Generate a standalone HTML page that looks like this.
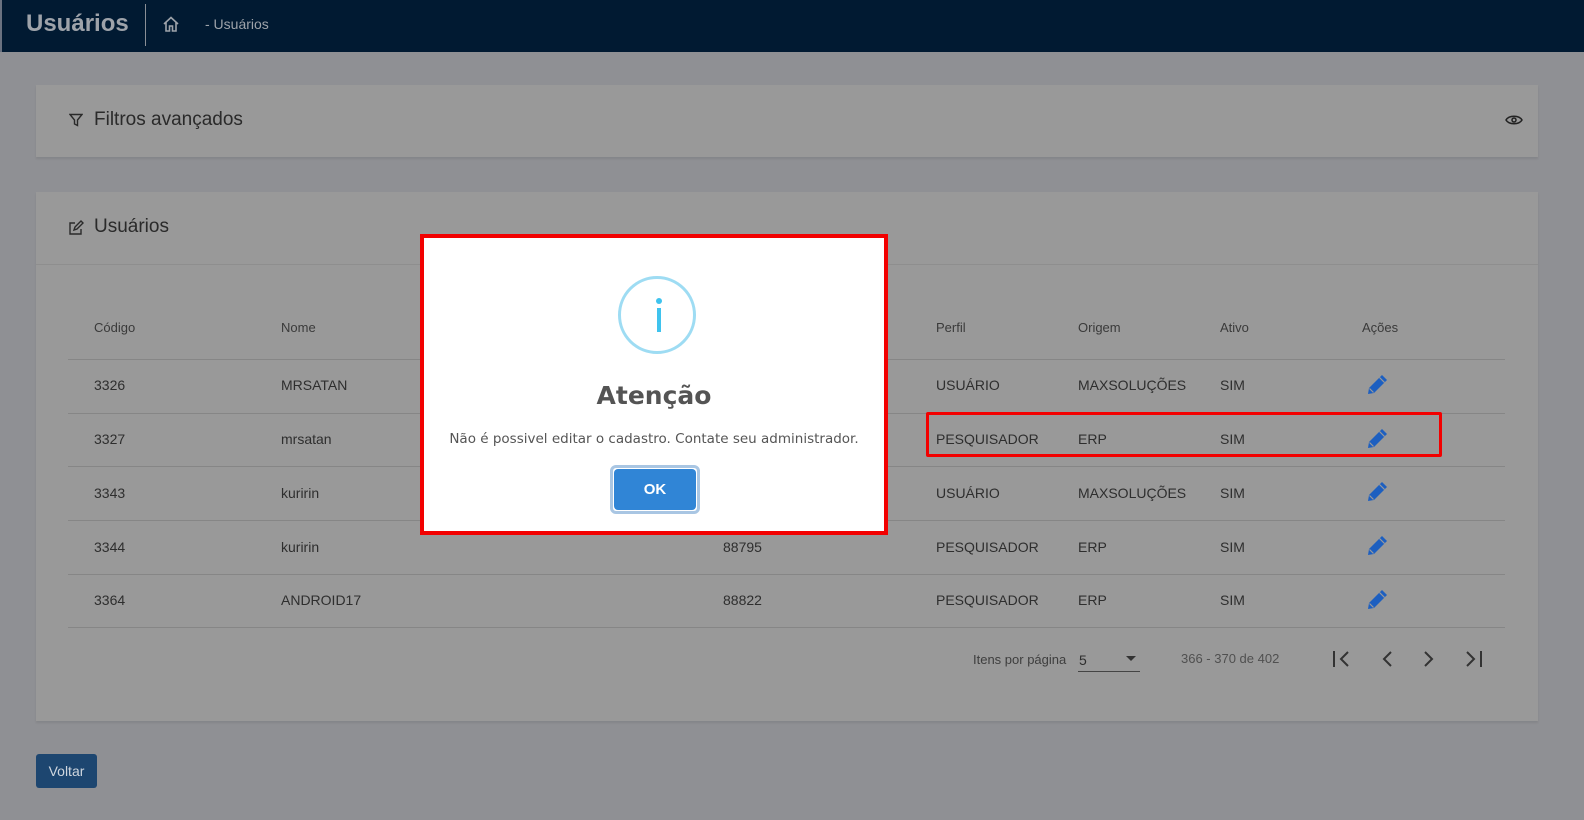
<!DOCTYPE html>
<html><head><meta charset="utf-8"><style>
*{margin:0;padding:0;box-sizing:border-box}
body{width:1584px;height:820px;overflow:hidden;background:#8f9094;font-family:"Liberation Sans",sans-serif;position:relative;color:#222}
.hdr{position:absolute;left:0;top:0;width:1584px;height:52px;background:#011a32;border-left:2px solid #6a7280}
.hdr .t{position:absolute;left:24px;top:10px;font-size:24px;font-weight:bold;color:#9ea3aa}
.hdr .sep{position:absolute;left:143px;top:4px;width:1px;height:42px;background:#8a8f96}
.hdr .bc{position:absolute;left:203px;top:16px;font-size:14px;color:#9ea3aa}
.card{position:absolute;left:36px;background:#999999;box-shadow:0 2px 2px rgba(0,0,0,.08)}
.h{position:absolute;font-size:19px;color:#2a2a2a}
.col{position:absolute;font-size:14px;color:#2e2e2e}
.th{position:absolute;font-size:13px;color:#3a3a3a}
.line{position:absolute;left:68px;width:1437px;height:1px;background:#868686}
.modal{position:absolute;left:420px;top:234px;width:468px;height:301px;background:#fff;border:4px solid #f20000}
.modal .circ{position:absolute;left:194px;top:38px;width:78px;height:78px;border:3px solid #9edcf3;border-radius:50%}
.modal .dot{position:absolute;left:35px;top:19px;width:6px;height:6px;border-radius:50%;background:#3fc3ee}
.modal .bar{position:absolute;left:36px;top:29px;width:4px;height:24px;background:#3fc3ee}
.modal .ttl{position:absolute;left:0;width:100%;top:143px;text-align:center;font-size:25px;font-weight:bold;color:#545454;font-family:"DejaVu Sans",sans-serif}
.modal .msg{position:absolute;left:0;width:100%;top:193px;text-align:center;font-size:13.5px;color:#555;font-family:"DejaVu Sans",sans-serif}
.ok{position:absolute;left:186px;top:227px;width:90px;height:49px;border:3px solid #a9c6e3;border-radius:6px;padding:1px}
.ok div{width:100%;height:100%;background:#3085d6;border-radius:4px;color:#fff;font-weight:bold;font-size:15px;text-align:center;line-height:41px}
.voltar{position:absolute;left:36px;top:754px;width:61px;height:34px;background:#1d4670;border-radius:3px;color:#cfd6de;font-size:14px;text-align:center;line-height:34px}
</style></head><body>
<div class="hdr"><div class="t">Usuários</div><div class="sep"></div>
<svg style="position:absolute;left:160px;top:15px" width="18" height="18" viewBox="0 0 18 18" fill="none" stroke="#9ea3aa" stroke-width="1.6"><path d="M2 9L9 2.5L16 9M4 7.5V16H7.5V11H10.5V16H14V7.5"/></svg>
<div class="bc">- Usuários</div></div>

<div class="card" style="top:85px;width:1502px;height:72px">
<svg style="position:absolute;left:33px;top:28px" width="14" height="14" viewBox="0 0 14 14" fill="none" stroke="#2a2a2a" stroke-width="1.4"><path d="M1 1.5H13L8.5 7V12.5L5.5 11V7Z"/></svg>
<div class="h" style="left:58px;top:24px">Filtros avançados</div>
<svg style="position:absolute;left:1469px;top:29px" width="18" height="12" viewBox="0 0 18 12" fill="none" stroke="#222" stroke-width="1.5"><path d="M1 6C4 1 14 1 17 6C14 11 4 11 1 6Z"/><circle cx="9" cy="6" r="2"/></svg>
</div>

<div class="card" style="top:192px;width:1502px;height:529px">
<svg style="position:absolute;left:32px;top:28px" width="16" height="16" viewBox="0 0 16 16" fill="none" stroke="#2a2a2a" stroke-width="1.4"><path d="M7 3H2V14H13V9M6 10L7 7L13 1L15 3L9 9Z"/></svg>
<div class="h" style="left:58px;top:24px">Usuários</div>
<div style="position:absolute;left:0;top:72px;width:1502px;height:1px;background:#8e8e8e"></div>
</div>

<div class="th" style="left:94px;top:320px">Código</div>
<div class="th" style="left:281px;top:320px">Nome</div>
<div class="th" style="left:936px;top:320px">Perfil</div>
<div class="th" style="left:1078px;top:320px">Origem</div>
<div class="th" style="left:1220px;top:320px">Ativo</div>
<div class="th" style="left:1362px;top:320px">Ações</div>
<div class="line" style="top:359px"></div>
<div class="line" style="top:413px"></div>
<div class="line" style="top:466px"></div>
<div class="line" style="top:520px"></div>
<div class="line" style="top:574px"></div>
<div class="line" style="top:627px"></div>

<div class="col" style="left:94px;top:377px">3326</div><div class="col" style="left:281px;top:377px">MRSATAN</div><div class="col" style="left:936px;top:377px">USUÁRIO</div><div class="col" style="left:1078px;top:377px">MAXSOLUÇÕES</div><div class="col" style="left:1220px;top:377px">SIM</div>
<div class="col" style="left:94px;top:431px">3327</div><div class="col" style="left:281px;top:431px">mrsatan</div><div class="col" style="left:936px;top:431px">PESQUISADOR</div><div class="col" style="left:1078px;top:431px">ERP</div><div class="col" style="left:1220px;top:431px">SIM</div>
<div class="col" style="left:94px;top:485px">3343</div><div class="col" style="left:281px;top:485px">kuririn</div><div class="col" style="left:936px;top:485px">USUÁRIO</div><div class="col" style="left:1078px;top:485px">MAXSOLUÇÕES</div><div class="col" style="left:1220px;top:485px">SIM</div>
<div class="col" style="left:94px;top:539px">3344</div><div class="col" style="left:281px;top:539px">kuririn</div><div class="col" style="left:723px;top:539px">88795</div><div class="col" style="left:936px;top:539px">PESQUISADOR</div><div class="col" style="left:1078px;top:539px">ERP</div><div class="col" style="left:1220px;top:539px">SIM</div>
<div class="col" style="left:94px;top:592px">3364</div><div class="col" style="left:281px;top:592px">ANDROID17</div><div class="col" style="left:723px;top:592px">88822</div><div class="col" style="left:936px;top:592px">PESQUISADOR</div><div class="col" style="left:1078px;top:592px">ERP</div><div class="col" style="left:1220px;top:592px">SIM</div>

<svg style="position:absolute;left:0;top:0" width="1584" height="820">
<defs><g id="p"><path d="M1 21L2 15L15 2L20 7L7 20Z" fill="#1d5fc0"/><path d="M2.5 15.5L6.5 19.5" stroke="#9a9a9a" stroke-width="1.2"/><path d="M12.5 4.5L17.5 9.5" stroke="#9a9a9a" stroke-width="1.2"/></g></defs>
<use href="#p" x="1367" y="373"/><use href="#p" x="1367" y="427"/><use href="#p" x="1367" y="480"/><use href="#p" x="1367" y="534"/><use href="#p" x="1367" y="588"/>
</svg>

<div style="position:absolute;left:926px;top:412px;width:516px;height:45px;border:3px solid #f20000;border-radius:2px"></div>

<div class="th" style="left:973px;top:652px;color:#3e3e3e">Itens por página</div>
<div class="col" style="left:1079px;top:652px">5</div>
<div style="position:absolute;left:1126px;top:656px;border-left:5px solid transparent;border-right:5px solid transparent;border-top:5px solid #333"></div>
<div style="position:absolute;left:1078px;top:671px;width:62px;height:1px;background:#444"></div>
<div class="th" style="left:1181px;top:651px;color:#505050">366 - 370 de 402</div>
<svg style="position:absolute;left:1330px;top:648px" width="160" height="22" viewBox="0 0 160 22" fill="none" stroke="#333" stroke-width="2"><path d="M4 3V19M18 4L11 11L18 18"/><path d="M61 4L54 11L61 18"/><path d="M95 4L102 11L95 18"/><path d="M137 4L144 11L137 18M151 3V19"/></svg>

<div class="modal">
<div class="circ"><div class="dot"></div><div class="bar"></div></div>
<div class="ttl">Atenção</div>
<div class="msg">Não é possivel editar o cadastro. Contate seu administrador.</div>
<div class="ok"><div>OK</div></div>
</div>

<div class="voltar">Voltar</div>
</body></html>
